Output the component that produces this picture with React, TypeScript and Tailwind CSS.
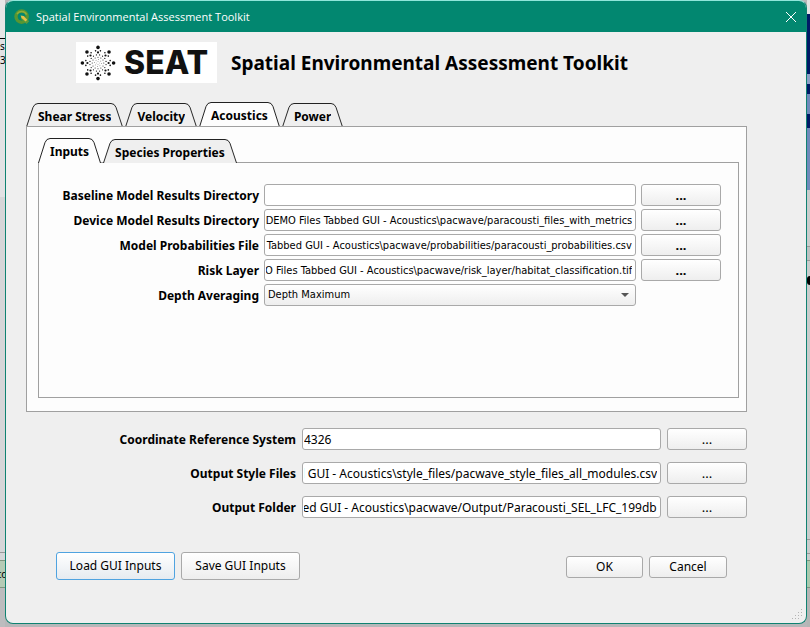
import { useEffect, useRef } from 'react'
import type { ReactNode } from 'react'

const edge = 'rounded-[3px] border border-[#a9a9a9]'
const buttonFace = 'bg-linear-to-b from-white to-[#eeeeee] active:to-[#dddddd]'
const smallText = "text-[11px] font-['DejaVu_Sans_Condensed','Noto_Sans',sans-serif]"
const labelText = 'shrink-0 pt-0.5 text-right text-[12px] leading-5 font-bold'

function QgisMark() {
  return (
    <svg viewBox="0 0 16 16" className="size-4" aria-hidden="true">
      <circle cx="7.6" cy="7.6" r="5.6" fill="none" stroke="#589632" strokeWidth="3.4" />
      <path d="M3 5.2A5.4 5.4 0 0 1 12.6 5.6" fill="none" stroke="#8fae3a" strokeWidth="1.4" />
      <path d="M7 7h3.2l5 5.2-2.6 2.8L7 10z" fill="#5a9a3c" />
      <path d="M6.6 6.4l3 .6 3.6 3.8-1.6 1.6L7.6 9z" fill="#e8c04a" />
    </svg>
  )
}

const rings = [
  { n: 8, r: 15.6, size: 1.8, turn: 0 },
  { n: 16, r: 12.4, size: 0.8, turn: 11.25 },
  { n: 8, r: 10.6, size: 1.1, turn: 0 },
  { n: 16, r: 8.2, size: 0.6, turn: 11.25 },
  { n: 12, r: 5.8, size: 0.5, turn: 0 },
  { n: 8, r: 3.4, size: 0.4, turn: 10 },
  { n: 4, r: 1.4, size: 0.3, turn: 0 },
]

function SeatLogo() {
  return (
    <div className="flex h-[41px] w-[141px] items-center gap-2 bg-white pl-1">
      <svg viewBox="-18 -18 36 36" className="size-9 shrink-0" fill="#111" aria-hidden="true">
        {rings.map((ring) =>
          Array.from({ length: ring.n }, (_, i) => {
            const a = ((i * 360) / ring.n + ring.turn) * (Math.PI / 180)
            return (
              <circle key={`${ring.r}-${i}`} cx={ring.r * Math.cos(a)} cy={ring.r * Math.sin(a)} r={ring.size} />
            )
          }),
        )}
      </svg>
      <span className="font-[Inter,sans-serif] text-[32px] leading-none font-extrabold text-[#111]">SEAT</span>
    </div>
  )
}

function Tab({ children, active = false }: { children: ReactNode; active?: boolean }) {
  const fill = active ? '#fdfdfd' : '#efefef'
  const height = active ? 'h-[25px]' : 'h-6'
  return (
    <button
      type="button"
      role="tab"
      aria-selected={active}
      className={`flex items-stretch text-[12px] font-bold ${height}`}
    >
      <svg viewBox="0 0 12 25" preserveAspectRatio="none" className="h-full w-3" aria-hidden="true">
        <path d="M.5 25L7 4.5Q8.500 .5 12 .5V25z" fill={fill} />
        <path d="M.5 25L7 4.500Q8.500 .5 12 .5" fill="none" stroke="#222" />
      </svg>
      <span className={`border-t border-[#222] pt-1 leading-[18px] ${active ? 'bg-[#fdfdfd]' : 'bg-[#efefef]'}`}>
        {children}
      </span>
      <svg viewBox="0 0 12 25" preserveAspectRatio="none" className="h-full w-3" aria-hidden="true">
        <path d="M11.500 25L5 4.500Q3.500 .5 0 .5V25z" fill={fill} />
        <path d="M11.500 25L5 4.500Q3.500 .5 0 .5" fill="none" stroke="#222" />
      </svg>
    </button>
  )
}

function PathInput({ id, value, className }: { id: string; value: string; className: string }) {
  const ref = useRef<HTMLInputElement>(null)
  useEffect(() => {
    const el = ref.current
    if (el) el.scrollLeft = el.scrollWidth
  }, [])
  return (
    <input
      ref={ref}
      id={id}
      type="text"
      defaultValue={value}
      className={`h-[22px] min-w-0 flex-1 bg-white pr-[3px] pl-px ${edge} ${className}`}
    />
  )
}

function Browse({ label, className = '' }: { label: string; className?: string }) {
  return (
    <button
      type="button"
      aria-label={`Browse ${label}`}
      className={`h-[22px] w-20 shrink-0 text-[13px] leading-5 ${edge} ${buttonFace} ${className}`}
    >
      ...
    </button>
  )
}

const base = '0\\DEMO Files Tabbed GUI - Acoustics\\'

const modelFields = [
  { id: 'baseline', label: 'Baseline Model Results Directory', value: '' },
  { id: 'device', label: 'Device Model Results Directory', value: base + 'pacwave/paracousti_files_with_metrics' },
  { id: 'prob', label: 'Model Probabilities File', value: base + 'pacwave/probabilities/paracousti_probabilities.csv' },
  { id: 'risk', label: 'Risk Layer', value: base + 'pacwave/risk_layer/habitat_classification.tif' },
]

const outputFields = [
  { id: 'crs', label: 'Coordinate Reference System', value: '4326' },
  { id: 'style', label: 'Output Style Files', value: base + 'style_files/pacwave_style_files_all_modules.csv' },
  { id: 'folder', label: 'Output Folder', value: base + 'pacwave/Output/Paracousti_SEL_LFC_199db' },
]

function InputsPanel() {
  return (
    <div role="tabpanel" className="h-[236px] border border-[#a0a0a0] pt-[21px] pr-[17px]">
      <div className="flex flex-col gap-[3px]">
        {modelFields.map((f) => (
          <div key={f.id} className="flex items-center gap-[5px]">
            <label htmlFor={f.id} className={`w-[220px] ${labelText}`}>
              {f.label}
            </label>
            <PathInput id={f.id} value={f.value} className={smallText} />
            <Browse label={f.label} className="font-bold" />
          </div>
        ))}
        <div className="flex items-center gap-[5px]">
          <label htmlFor="depth" className={`w-[220px] ${labelText}`}>
            Depth Averaging
          </label>
          <div className="relative flex min-w-0 flex-1">
            <select id="depth" className={`h-[22px] w-full appearance-none px-[3px] ${smallText} ${edge} ${buttonFace}`}>
              <option>Depth Maximum</option>
            </select>
            <svg viewBox="0 0 8 4" className="pointer-events-none absolute top-[9px] right-[7px] h-1 w-2" aria-hidden="true">
              <path d="M0 0h8L4 4z" fill="#555" />
            </svg>
          </div>
          <div className="w-20 shrink-0" />
        </div>
      </div>
    </div>
  )
}

function LeftBackdrop() {
  return (
    <div className="flex w-[5px] shrink-0 flex-col overflow-hidden bg-[#d6d6d8] text-[10px]" aria-hidden="true">
      <div className="h-[39px] border-b border-black bg-[#e6e6e6]" />
      <div className="h-[158px] bg-[#e2e2e4] leading-[14px]">
        <div>s</div>
        <div>3</div>
      </div>
      <div className="flex-1 border-b border-[#999]" />
      <div className="h-[7px]" />
      <div className="flex h-7 items-center justify-center border-y border-[#7f957f] bg-[#b5cbb5]">to</div>
      <div className="h-[39px] bg-[#bcbcbe]" />
    </div>
  )
}

function RightBackdrop() {
  return (
    <div className="flex w-[3px] shrink-0 flex-col overflow-hidden bg-[#c9cdcd]" aria-hidden="true">
      <div className="h-3.5 bg-[#e4e4e4]" />
      <div className="h-[60px] bg-[#001a66]" />
      <div className="h-[10px] bg-[#8ca0c8]" />
      <div className="h-[10px] bg-[#001a66]" />
      <div className="h-5 bg-[#6f8abb]" />
      <div className="h-[14px] bg-[#001a66]" />
      <div className="h-[62px] bg-[#6f8abb]" />
      <div className="h-[57px] border-b border-[#999]" />
      <div className="h-[14px] border-b border-[#999] bg-[#bcc2c2]" />
      <div className="h-[15px]" />
      <div className="h-[9px] rounded-l-full bg-black" />
      <div className="flex-1 border-b border-[#999]" />
      <div className="h-[14px] border-b border-[#999]" />
      <div className="h-[6px]" />
      <div className="h-7 border-y border-[#7f957f] bg-[#a9c9ae]" />
      <div className="h-[39px] bg-[#b5b5b5]" />
    </div>
  )
}

export default function App() {
  return (
    <div className="flex min-h-screen bg-[#b7b7b9] font-['Noto_Sans',sans-serif] text-black">
      <LeftBackdrop />
      <div className="flex min-w-0 flex-1 flex-col bg-[#b7b7b9] pb-[3px]">
        <main className="flex flex-1 flex-col overflow-hidden rounded-[8px] border border-[#0f8271] border-t-[#8fe6da] bg-[#efefef]">
          <header className="flex h-[31px] shrink-0 items-center bg-[#028770] pr-2 pl-2 text-white">
            <QgisMark />
            <span className="ml-1.5 flex-1 font-['Open_Sans',sans-serif] text-[11px] leading-4">
              Spatial Environmental Assessment Toolkit
            </span>
            <button type="button" aria-label="Close" className="p-px">
              <svg viewBox="0 0 12 12" className="size-3" fill="none" stroke="white" aria-hidden="true">
                <path d="M1 1l10 10M11 1L1 11" />
              </svg>
            </button>
          </header>

          <div className="flex flex-1 flex-col pr-[59px] pl-5">
            <div className="mt-[10px] flex items-center gap-3.5 pl-[50px]">
              <SeatLogo />
              <h1 className="text-[19px] leading-7 font-bold whitespace-nowrap">Spatial Environmental Assessment Toolkit</h1>
            </div>

            <div role="tablist" className="mt-[19px] flex items-end gap-0.5">
              <Tab>Shear Stress</Tab>
              <Tab>Velocity</Tab>
              <Tab active>Acoustics</Tab>
              <Tab>Power</Tab>
            </div>
            <div className="-mt-px border border-[#a0a0a0] bg-[#fdfdfd] pr-[7px] pb-[13px] pl-[11px]">
              <div role="tablist" className="mt-[11px] flex items-end gap-0.5">
                <Tab active>Inputs</Tab>
                <Tab>Species Properties</Tab>
              </div>
              <div className="-mt-px">
                <InputsPanel />
              </div>
            </div>

            <div className="mt-4 flex flex-col gap-3">
              {outputFields.map((f) => (
                <div key={f.id} className="flex items-center gap-1.5">
                  <label htmlFor={f.id} className={`w-[270px] ${labelText}`}>
                    {f.label}
                  </label>
                  <PathInput id={f.id} value={f.value} className="text-[12px]" />
                  <Browse label={f.label} />
                </div>
              ))}
            </div>

            <div className="mt-[34px] flex items-start justify-between pr-5 pl-[30px] text-[12px]">
              <div className="flex gap-1.5">
                <button
                  type="button"
                  className="h-7 w-[119px] rounded-[3px] border border-[#4fa3e0] bg-linear-to-b from-white to-[#e6ebf0]"
                >
                  Load GUI Inputs
                </button>
                <button type="button" className={`h-7 w-[119px] ${edge} ${buttonFace}`}>
                  Save GUI Inputs
                </button>
              </div>
              <div className="mt-1 flex gap-1.5">
                <button type="button" className={`h-[22px] w-[77px] leading-5 ${edge} ${buttonFace}`}>
                  OK
                </button>
                <button type="button" className={`h-[22px] w-[78px] leading-5 ${edge} ${buttonFace}`}>
                  Cancel
                </button>
              </div>
            </div>
          </div>
          <svg viewBox="0 0 12 12" className="mr-0.5 mb-0.5 size-3 shrink-0 self-end" fill="#b4b4b4" aria-hidden="true">
            <path d="M9 0h1v1H9zM6 3h1v1H6zM9 3h1v1H9zM3 6h1v1H3zM6 6h1v1H6zM9 6h1v1H9zM0 9h1v1H0zM3 9h1v1H3zM6 9h1v1H6z" />
          </svg>
        </main>
      </div>
      <RightBackdrop />
    </div>
  )
}
